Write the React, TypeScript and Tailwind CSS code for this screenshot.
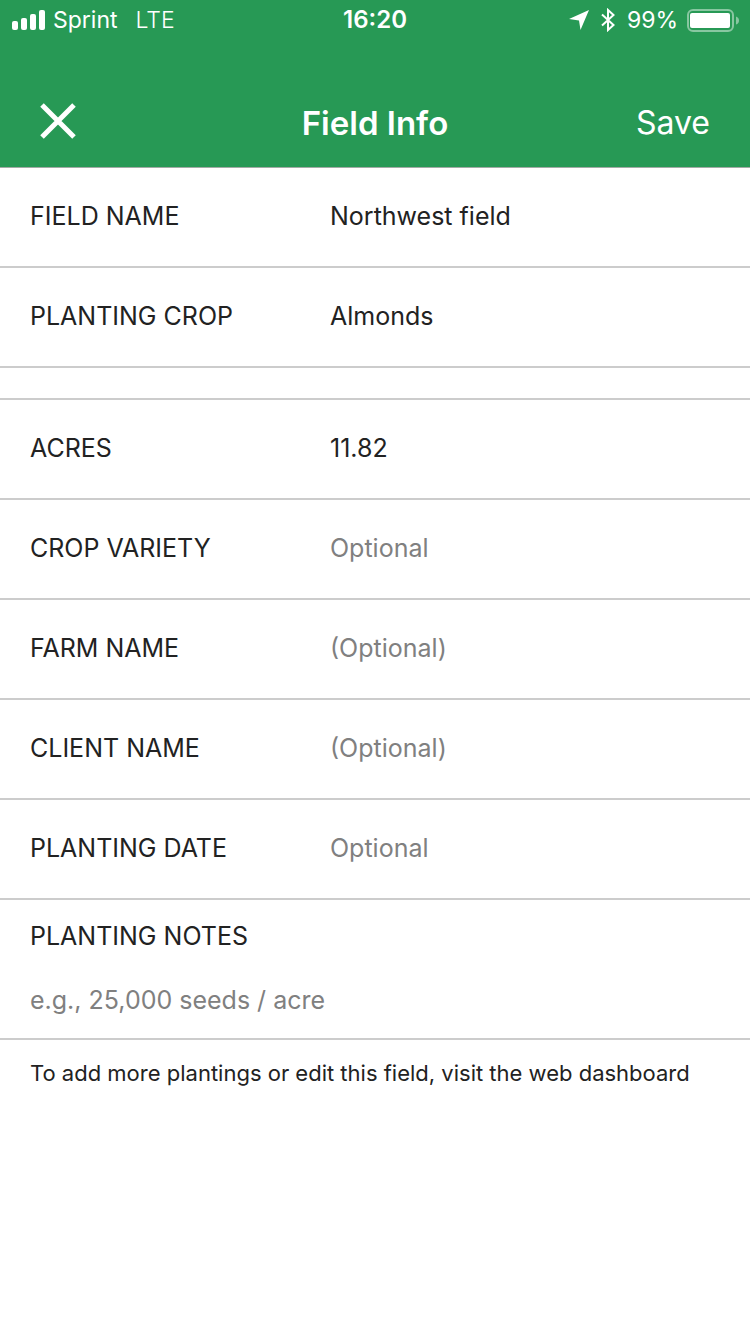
import React from 'react';

type FieldProps = {
  id: string;
  label: string;
  value?: string;
  placeholder?: string;
};

function Field({ id, label, value, placeholder }: FieldProps) {
  return (
    <div className="flex h-[100px] items-center border-b-2 border-[#ccc] px-[30px]">
      <label htmlFor={id} className="w-[300px] shrink-0">
        {label}
      </label>
      <input
        id={id}
        type="text"
        defaultValue={value}
        placeholder={placeholder}
        className="min-w-0 flex-1 bg-transparent outline-none placeholder:text-[#808080]"
      />
    </div>
  );
}

function StatusBar() {
  return (
    <div className="grid grid-cols-3 items-center pt-1 text-[23px] leading-8">
      <div className="flex items-center pl-3">
        <svg width="33" height="20" viewBox="0 0 33 20" fill="currentColor" aria-hidden="true">
          <rect x="0" y="11" width="6" height="9" rx="2" />
          <rect x="9" y="8" width="6" height="12" rx="2" />
          <rect x="18" y="4" width="6" height="16" rx="2" />
          <rect x="27" y="0" width="6" height="20" rx="2" />
        </svg>
        <span className="ml-2">Sprint</span>
        <span className="ml-[18px] font-light">LTE</span>
      </div>
      <div className="text-center text-2xl leading-8 font-semibold">16:20</div>
      <div className="flex items-center justify-end pr-[11px]">
        <svg width="20" height="20" viewBox="0 0 20 20" fill="currentColor" aria-hidden="true">
          <path d="M20 0 0 9l10 1.500L11.500 20Z" />
        </svg>
        <svg className="ml-3" width="14" height="24" viewBox="0 0 14 24" fill="none" stroke="currentColor" strokeWidth="2" aria-hidden="true">
          <path d="M1 6.500 12.500 17 7 22V2l5.500 5L1 17.500" />
        </svg>
        <span className="ml-3">99%</span>
        <svg className="ml-2" width="53" height="24" viewBox="0 0 53 24" aria-hidden="true">
          <rect x="2" y="2" width="45" height="21" rx="5" fill="none" stroke="#fff" strokeOpacity=".45" strokeWidth="2" />
          <rect x="4" y="5" width="40" height="15" rx="2" fill="#fff" />
          <path d="M50 8.500q3 1 3 4t-3 4Z" fill="#fff" fillOpacity=".45" />
        </svg>
      </div>
    </div>
  );
}

export default function App() {
  return (
    <div className="min-h-screen bg-white font-['Inter',sans-serif] text-[25px] text-[#222]">
      <header className="h-[168px] border-b border-[#a3aaa5] bg-[#279955] text-white">
        <StatusBar />
        <div className="grid grid-cols-3 items-center px-10 pt-[63px]">
          <button type="button" aria-label="Close" className="justify-self-start pb-1">
            <svg width="36" height="36" viewBox="0 0 36 36" stroke="currentColor" strokeWidth="5" aria-hidden="true">
              <path d="m2 2 32 32M34 2 2 34" />
            </svg>
          </button>
          <h1 className="text-center text-[33px] leading-12 font-semibold whitespace-nowrap">Field Info</h1>
          <button type="button" className="justify-self-end text-[32px] leading-12">
            Save
          </button>
        </div>
      </header>
      <form>
        <Field id="name" label="FIELD NAME" value="Northwest field" />
        <Field id="crop" label="PLANTING CROP" value="Almonds" />
        <div className="h-8 border-b-2 border-[#ccc]" />
        <Field id="acres" label="ACRES" value="11.82" />
        <Field id="variety" label="CROP VARIETY" placeholder="Optional" />
        <Field id="farm" label="FARM NAME" placeholder="(Optional)" />
        <Field id="client" label="CLIENT NAME" placeholder="(Optional)" />
        <Field id="date" label="PLANTING DATE" placeholder="Optional" />
        <div className="flex h-[140px] flex-col gap-6 border-b-2 border-[#ccc] px-[30px] pt-4 leading-10">
          <label htmlFor="notes">PLANTING NOTES</label>
          <input
            id="notes"
            type="text"
            placeholder="e.g., 25,000 seeds / acre"
            className="w-full bg-transparent outline-none placeholder:text-[#808080]"
          />
        </div>
      </form>
      <p className="px-[30px] pt-4 text-[22px] leading-[34px]">
        To add more plantings or edit this field, visit the web dashboard
      </p>
    </div>
  );
}
